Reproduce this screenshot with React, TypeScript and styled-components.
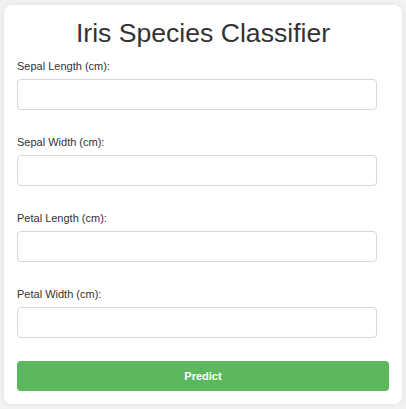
import React from "react";
import styled, { createGlobalStyle } from "styled-components";

const GlobalStyle = createGlobalStyle`
  html, body {
    margin: 0;
    padding: 0;
    background: #f2f2f2;
  }
  body {
    font-family: "Liberation Sans", Arial, sans-serif;
    color: #333;
  }
  * { box-sizing: border-box; }
`;

const Page = styled.div`
  padding: 5px 4px 4px 4px;
`;

const Card = styled.div`
  width: 398px;
  background: #ffffff;
  border-radius: 8px;
  box-shadow: 0 0 6px rgba(0, 0, 0, 0.08);
  padding: 13px;
  display: flex;
  flex-direction: column;
`;

const Title = styled.h1`
  margin: 0 0 11px 0;
  font-size: 26.6px;
  font-weight: 400;
  line-height: normal;
  text-align: center;
  color: #333;
`;

const Form = styled.form`
  display: flex;
  flex-direction: column;
`;

const Group = styled.div`
  display: flex;
  flex-direction: column;
  & + & {
    margin-top: 25.6px;
  }
`;

const Label = styled.label`
  display: block;
  font-size: 11px;
  line-height: normal;
  color: #333;
  margin-bottom: 7.4px;
`;

const Input = styled.input`
  width: 360px;
  height: 31px;
  border: 1px solid #d6d6d6;
  border-radius: 4px;
  background: #fff;
  padding: 0 8px;
  font-family: inherit;
  font-size: 12px;
  outline: none;
`;

const Button = styled.button`
  margin-top: 22.6px;
  width: 100%;
  height: 30px;
  border: none;
  border-radius: 4px;
  background: #5cb85c;
  color: #ffffff;
  font-family: "Liberation Sans", Arial, sans-serif;
  font-size: 11px;
  font-weight: 700;
  cursor: pointer;
`;

const fields = [
  "Sepal Length (cm):",
  "Sepal Width (cm):",
  "Petal Length (cm):",
  "Petal Width (cm):",
];

export default function App() {
  return (
    <>
      <GlobalStyle />
      <Page>
        <Card>
          <Title>Iris Species Classifier</Title>
          <Form onSubmit={(e) => e.preventDefault()}>
            {fields.map((f, i) => (
              <Group key={f}>
                <Label htmlFor={`f${i}`}>{f}</Label>
                <Input id={`f${i}`} type="number" step="any" />
              </Group>
            ))}
            <Button type="submit">Predict</Button>
          </Form>
        </Card>
      </Page>
    </>
  );
}
